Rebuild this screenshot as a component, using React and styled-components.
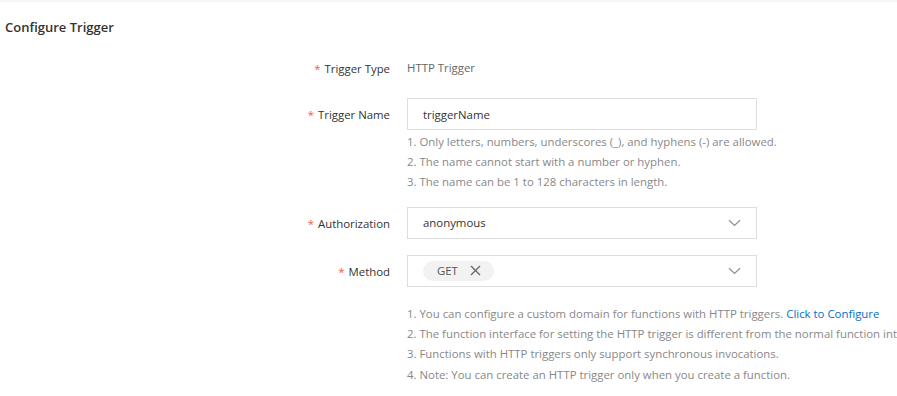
import React from 'react';
import styled, { createGlobalStyle } from 'styled-components';

const GlobalStyle = createGlobalStyle`
  body {
    margin: 0;
    background: #fff;
    font-family: "Segoe UI", "Open Sans", "Noto Sans", sans-serif;
    overflow: hidden;
  }
`;

const Page = styled.div`
  width: 897px;
  height: 396px;
  overflow: hidden;
  border-top: 2px solid #f5f5f5;
  box-sizing: border-box;
`;

const Title = styled.h3`
  margin: 15px 0 0 5px;
  font-size: 13px;
  line-height: 20px;
  font-weight: 600;
  color: #333;
`;

const Form = styled.div`
  margin-top: 15px;
`;

const FormItem = styled.div`
  display: grid;
  grid-template-columns: 390px 1fr;
  column-gap: 17px;
  margin-bottom: ${p => p.$gap || 14}px;
`;

const Label = styled.div`
  height: 32px;
  line-height: 33px;
  text-align: right;
  font-size: 11.4px;
  color: #333;
  white-space: nowrap;

  &::before {
    content: '*';
    color: #ef5a4c;
    margin-right: 4px;
  }
`;

const Control = styled.div`
  min-width: 0;
`;

const Value = styled.div`
  height: 32px;
  line-height: 32px;
  font-size: 11.4px;
  color: #666;
`;

const Box = styled.div`
  width: 350px;
  height: 32px;
  box-sizing: border-box;
  border: 1px solid #dedede;
  display: flex;
  align-items: center;
  padding: 0 15px;
  font-size: 11.4px;
  color: #333;
`;

const BoxText = styled.span`
  flex: 1;
`;

const Tag = styled.span`
  display: inline-flex;
  align-items: center;
  gap: 12px;
  height: 20px;
  padding: 0 13px 0 14px;
  border-radius: 10px;
  background: #f2f2f2;
  color: #555;
  font-size: 11.4px;
`;

const Help = styled.div`
  margin-top: ${p => p.$top || 1}px;
  font-size: 11.4px;
  line-height: 20.3px;
  color: #888;
  white-space: nowrap;
`;

const Link = styled.a`
  color: #0070cc;
  text-decoration: none;
`;

const Chevron = () => (
  <svg width="13" height="8" viewBox="0 0 13 8" fill="none">
    <path d="M1 1.2L6.5 6.5L12 1.2" stroke="#8a8f99" strokeWidth="1.2" />
  </svg>
);

const Close = () => (
  <svg width="11" height="11" viewBox="0 0 11 11" fill="none">
    <path d="M1 1L10 10M10 1L1 10" stroke="#666" strokeWidth="1.3" />
  </svg>
);

export default function App() {
  return (
    <Page>
      <GlobalStyle />
      <Title>Configure Trigger</Title>
      <Form>
        <FormItem>
          <Label>Trigger Type</Label>
          <Control>
            <Value>HTTP Trigger</Value>
          </Control>
        </FormItem>
        <FormItem $gap={14.5}>
          <Label>Trigger Name</Label>
          <Control>
            <Box><BoxText>triggerName</BoxText></Box>
            <Help $top={1.5}>
              <div>1. Only letters, numbers, underscores (_), and hyphens (-) are allowed.</div>
              <div>2. The name cannot start with a number or hyphen.</div>
              <div>3. The name can be 1 to 128 characters in length.</div>
            </Help>
          </Control>
        </FormItem>
        <FormItem $gap={16}>
          <Label>Authorization</Label>
          <Control>
            <Box><BoxText>anonymous</BoxText><Chevron /></Box>
          </Control>
        </FormItem>
        <FormItem>
          <Label>Method</Label>
          <Control>
            <Box>
              <BoxText><Tag>GET <Close /></Tag></BoxText>
              <Chevron />
            </Box>
            <Help $top={17}>
              <div>1. You can configure a custom domain for functions with HTTP triggers. <Link>Click to Configure</Link></div>
              <div>2. The function interface for setting the HTTP trigger is different from the normal function interface.</div>
              <div>3. Functions with HTTP triggers only support synchronous invocations.</div>
              <div>4. Note: You can create an HTTP trigger only when you create a function.</div>
            </Help>
          </Control>
        </FormItem>
      </Form>
    </Page>
  );
}
